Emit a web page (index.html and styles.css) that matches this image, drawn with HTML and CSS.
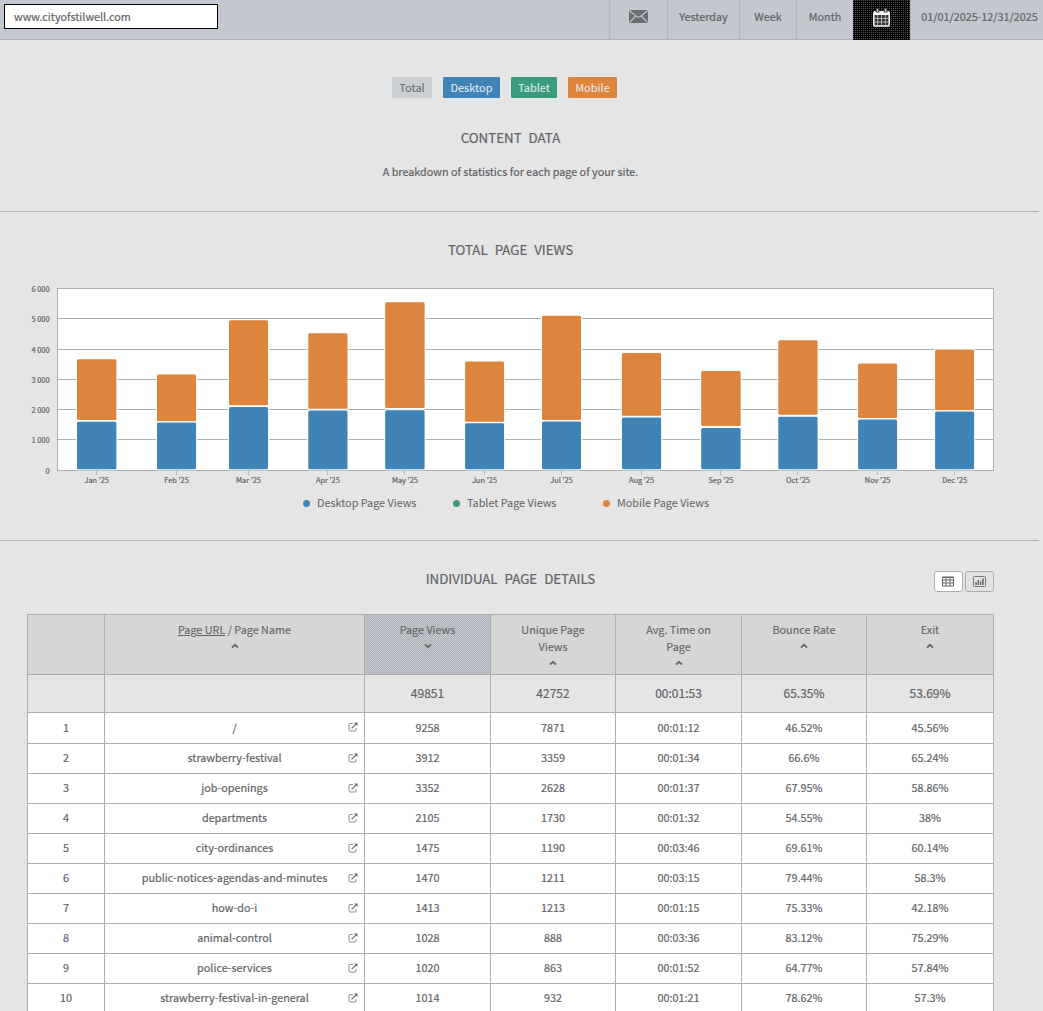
FILE: index.html
```html
<!DOCTYPE html>
<html lang="en">
<head>
  <meta charset="UTF-8">
  <meta name="viewport" content="width=device-width, initial-scale=1.0">
  <title>Content Data</title>
  <link rel="stylesheet" href="styles.css">
</head>
<body>
  <!-- Icons -->
  <svg class="sprite" width="0" height="0">
    <symbol id="icon-link" viewBox="0 0 10 10">
      <path d="M5 1.5H2Q1 1.5 1 2.5V8Q1 9 2 9H7Q8 9 8 8V6" fill="none" stroke="#8a8b8d" stroke-width="1"/>
      <path d="M3.6 6.4L8 2" fill="none" stroke="#77787b" stroke-width="1.3"/>
      <path d="M6 .5H9.5V4Z" fill="#6b6c6f"/>
    </symbol>
    <symbol id="icon-up" viewBox="0 0 8 6">
      <path d="M1 4.6L4 1.8L7 4.6" fill="none" stroke="#666" stroke-width="1.8"/>
    </symbol>
    <symbol id="icon-down" viewBox="0 0 8 6">
      <path d="M1 1.4L4 4.2L7 1.4" fill="none" stroke="#666" stroke-width="1.8"/>
    </symbol>
  </svg>

  <header class="topbar">
    <div class="site">www.cityofstilwell.com</div>
    <nav class="periods">
      <a class="mail">
        <svg width="19" height="13" viewBox="0 0 19 13">
          <rect width="19" height="13" rx="1.5" fill="#6b6d70"/>
          <path d="M.5 .8L7.5 6.4Q9.5 8 11.5 6.4L18.5 .8M1 12.2L6.5 6M18 12.2L12.5 6" fill="none" stroke="#c3c7cf" stroke-width="1.2"/>
        </svg>
      </a>
      <a class="yesterday">Yesterday</a>
      <a class="week">Week</a>
      <a class="month">Month</a>
      <a class="custom">
        <svg width="17" height="19" viewBox="0 0 17 19">
          <rect x=".8" y="4" width="15.4" height="14" rx="1" fill="#333" stroke="#fff" stroke-width="1.5"/>
          <path d="M1 3.2H16V7H1Z" fill="#fff"/>
          <path d="M4.5 0V4.5M12.5 0V4.5" stroke="#000" stroke-width="3.6"/>
          <path d="M4.5 .5V4.5M12.5 .5V4.5" stroke="#bbb" stroke-width="2"/>
          <path d="M1 10.5H16M1 14H16M4.7 7V18M8.5 7V18M12.3 7V18" stroke="#bbb" stroke-width=".9"/>
        </svg>
      </a>
      <a class="range">01/01/2025-12/31/2025</a>
    </nav>
  </header>

  <section class="intro">
    <div class="tags">
      <span class="tag total">Total</span>
      <span class="tag desktop">Desktop</span>
      <span class="tag tablet">Tablet</span>
      <span class="tag mobile">Mobile</span>
    </div>
    <h2>CONTENT DATA</h2>
    <p>A breakdown of statistics for each page of your site.</p>
  </section>

  <section class="views">
    <h2>TOTAL PAGE VIEWS</h2>
    <svg id="chart" width="967" height="216" viewBox="27 274 967 216"></svg>
    <div class="legend">
      <span><i class="desktop"></i>Desktop Page Views</span>
      <span><i class="tablet"></i>Tablet Page Views</span>
      <span><i class="mobile"></i>Mobile Page Views</span>
    </div>
  </section>

  <section class="details">
    <div class="details-head">
      <h2>INDIVIDUAL PAGE DETAILS</h2>
      <div class="toggle">
        <button class="active">
          <svg width="12" height="11" viewBox="0 0 12 11">
            <path d="M.5 1H11.5V10H.5ZM0 1.5H12M0 4H12M0 7H12M4 1V10M8 1V10" fill="none" stroke="#666" stroke-width="1"/>
          </svg>
        </button>
        <button>
          <svg width="13" height="11" viewBox="0 0 13 11">
            <rect x=".5" y=".5" width="12" height="10" rx="1" fill="none" stroke="#77797c"/>
            <path d="M3 6V9M5.3 4V9M7.7 5.5V9M10 2.5V9" stroke="#666" stroke-width="1.5"/>
          </svg>
        </button>
      </div>
    </div>
    <table>
      <colgroup>
        <col class="c-num"><col class="c-url"><col class="c-views"><col class="c-unique"><col class="c-time"><col class="c-bounce"><col class="c-exit">
      </colgroup>
      <thead>
        <tr>
          <th></th>
          <th><u>Page URL</u> / Page Name<svg class="sort"><use href="#icon-up"/></svg></th>
          <th class="sorted">Page Views<svg class="sort"><use href="#icon-down"/></svg></th>
          <th>Unique Page<br>Views<svg class="sort"><use href="#icon-up"/></svg></th>
          <th>Avg. Time on<br>Page<svg class="sort"><use href="#icon-up"/></svg></th>
          <th>Bounce Rate<svg class="sort"><use href="#icon-up"/></svg></th>
          <th>Exit<svg class="sort"><use href="#icon-up"/></svg></th>
        </tr>
        <tr class="totals">
          <td></td><td></td><td>49851</td><td>42752</td><td>00:01:53</td><td>65.35%</td><td>53.69%</td>
        </tr>
      </thead>
      <tbody id="rows"></tbody>
    </table>
  </section>

  <script>
    const pages = [
      ["/", 9258, 7871, "00:01:12", "46.52%", "45.56%"],
      ["strawberry-festival", 3912, 3359, "00:01:34", "66.6%", "65.24%"],
      ["job-openings", 3352, 2628, "00:01:37", "67.95%", "58.86%"],
      ["departments", 2105, 1730, "00:01:32", "54.55%", "38%"],
      ["city-ordinances", 1475, 1190, "00:03:46", "69.61%", "60.14%"],
      ["public-notices-agendas-and-minutes", 1470, 1211, "00:03:15", "79.44%", "58.3%"],
      ["how-do-i", 1413, 1213, "00:01:15", "75.33%", "42.18%"],
      ["animal-control", 1028, 888, "00:03:36", "83.12%", "75.29%"],
      ["police-services", 1020, 863, "00:01:52", "64.77%", "57.84%"],
      ["strawberry-festival-in-general", 1014, 932, "00:01:21", "78.62%", "57.3%"]
    ];

    document.getElementById("rows").innerHTML = pages.map(([url, ...cells], i) => `
      <tr>
        <td>${i + 1}</td>
        <td><div class="url"><span>${url}</span><svg class="link"><use href="#icon-link"/></svg></div></td>
        ${cells.map(c => `<td>${c}</td>`).join("")}
      </tr>`).join("");

    // month, left edge, width, top of mobile, bottom of mobile, top of desktop
    const months = [
      ["Jan", 77, 39.4, 359.2, 420, 421.7],
      ["Feb", 157, 39.1, 374.6, 421.2, 422.6],
      ["Mar", 229, 39, 320.2, 405.3, 407],
      ["Apr", 308.3, 39.2, 333.3, 408.8, 410.5],
      ["May", 385.2, 39.4, 302.2, 408, 410.3],
      ["Jun", 465.1, 39, 361.5, 421.8, 423.2],
      ["Jul", 542, 39, 315.7, 419.9, 421.6],
      ["Aug", 621.9, 39.2, 353, 415.8, 417.5],
      ["Sep", 701.2, 39.4, 371, 426, 428.1],
      ["Oct", 778.3, 39.3, 340.2, 414.8, 416.7],
      ["Nov", 858.1, 39, 363.6, 418, 419.5],
      ["Dec", 935.1, 39, 349.6, 410.3, 411.6]
    ];
    const grid = [288.5, 318.5, 349.5, 379.5, 409.5, 439.5, 470.5];
    const labels = ["6 000", "5 000", "4 000", "3 000", "2 000", "1 000", "0"];

    let out = `<rect class="plot" x="57.5" y="288.5" width="936" height="182"/>`;
    grid.forEach((y, i) => {
      out += `<path class="grid" d="M57 ${y}H994"/>`;
      out += `<text class="axis" x="49.6" y="${y + 3}" text-anchor="end">${labels[i]}</text>`;
    });
    months.forEach(([name, x, w, top, bottom, base]) => {
      const mid = x + w / 2;
      out += `<rect class="bar mobile" x="${x}" y="${top}" width="${w}" height="${bottom - top}" rx="1.5"/>`;
      out += `<rect class="bar desktop" x="${x}" y="${base}" width="${w}" height="${469.2 - base}" rx="1.5"/>`;
      out += `<path class="tick" d="M${Math.floor(mid) + .5} 471V475"/>`;
      out += `<text class="axis" x="${mid}" y="483" text-anchor="middle">${name} '25</text>`;
    });
    document.getElementById("chart").innerHTML = out;
  </script>
</body>
</html>
```
FILE: styles.css
```css
* {
  box-sizing: border-box;
}

body {
  margin: 0;
  height: 1011px;
  overflow: hidden;
  background: #e5e5e5;
  color: #626366;
  font-family: "Noto Sans CJK SC", "Noto Sans", sans-serif;
  font-size: 10.8px;
  line-height: 17px;
  -webkit-text-stroke: 0.2px;
}

h2 {
  margin: 0;
  font-size: 13.3px;
  font-weight: 400;
  line-height: 20px;
  word-spacing: 4px;
  text-align: center;
}

.sprite {
  position: absolute;
}

/* Top bar */
.topbar {
  display: flex;
  justify-content: space-between;
  height: 40px;
  background: #c3c7cf;
  border-bottom: 1px solid #acafb3;
}

.site {
  width: 214px;
  height: 25px;
  margin: 4px 0 0 4px;
  padding-left: 9px;
  line-height: 22px;
  background: #fff;
  border: 1px solid #000;
}

.periods {
  display: flex;
  height: 40px;
}

.periods a {
  display: flex;
  justify-content: center;
  height: 39px;
  border-left: 1px dotted #a3a5a8;
  line-height: 32px;
}

.periods .mail { width: 58px; }
.periods .yesterday { width: 72px; }
.periods .week { width: 57px; }
.periods .month { width: 57px; }
.periods .range { width: 133px; padding-left: 5px; }

.mail svg {
  margin-top: 10px;
}

.periods .custom {
  width: 57px;
  height: 40px;
  border: 0;
  background: repeating-conic-gradient(#000 0 75%, #5a5a5a 0 100%) 0 0 / 2px 2px;
}

.custom svg {
  margin: 8px 1px 0 0;
}

/* Intro */
.intro {
  width: 1039px;
  height: 172px;
  padding: 37px 45px 0 27px;
  border-bottom: 1px solid #afb0b2;
}

.tags {
  display: flex;
  justify-content: center;
  gap: 11px;
  margin-right: 13px;
}

.tag {
  height: 21px;
  padding-left: 1px;
  line-height: 21px;
  text-align: center;
  border-radius: 1px;
  color: #e9eef2;
  -webkit-text-stroke: 0;
  font-size: 11px;
}

.tag.total { width: 40px; background: #cbd0d5; color: #626366; }
.tag.desktop { width: 57px; background: #4083b7; }
.tag.tablet { width: 46px; background: #3a9c7e; }
.tag.mobile { width: 49px; background: #dd843d; }

.intro h2 {
  margin-top: 30px;
}

.intro p {
  margin: 15px 0 0;
  text-align: center;
}

/* Chart */
.views {
  width: 1039px;
  height: 329px;
  padding: 28px 45px 0 27px;
  border-bottom: 1px solid #afb0b2;
}

#chart {
  display: block;
  margin-top: 14px;
}

.plot { fill: #fff; stroke: #afb0b2; }
.grid { stroke: #afb0b2; }
.tick { stroke: #b4b8bf; }
.axis { font-size: 7.4px; fill: #626366; stroke: #626366; stroke-width: 0.2px; }
.bar { stroke: #fff; stroke-width: 2px; paint-order: stroke; }
.bar.desktop { fill: #4083b7; }
.bar.mobile { fill: #dd843d; }

.legend {
  display: flex;
  margin: 4px 0 0 276px;
  -webkit-text-stroke: 0;
}

.legend span {
  display: flex;
  align-items: center;
  width: 150px;
}

.legend i {
  width: 7px;
  height: 7px;
  margin: 1px 7px 0 0;
  border-radius: 50%;
}

.legend .desktop { background: #4083b7; }
.legend .tablet { background: #3a9c7e; }
.legend .mobile { background: #dd843d; }

/* Page details */
.details {
  padding: 28px 49px 0 27px;
}

.details-head {
  display: grid;
  grid-template-columns: 60px 1fr 60px;
  height: 45px;
}

.details-head h2 {
  grid-column: 2;
}

.toggle {
  display: flex;
  gap: 2px;
  padding-top: 2px;
}

.toggle button {
  display: flex;
  align-items: center;
  justify-content: center;
  width: 29px;
  height: 21px;
  padding: 0;
  background: #e2e2e2;
  border: 1px solid #adaeb0;
  border-radius: 3px;
}

.toggle .active {
  padding-right: 2px;
  background: #fff;
}

table {
  width: 967px;
  table-layout: fixed;
  border-collapse: separate;
  border-spacing: 0;
  border-top: 1px solid #adaeb0;
  border-left: 1px solid #adaeb0;
}

.c-num { width: 77px; }
.c-url { width: 260px; }
.c-views { width: 126px; }
.c-unique { width: 125px; }
.c-time { width: 126px; }
.c-bounce { width: 125px; }
.c-exit { width: 127px; }

th, td {
  padding: 0 0 2px;
  height: 30px;
  text-align: center;
  font-weight: 400;
  border-right: 1px solid #adaeb0;
  border-bottom: 1px solid #adaeb0;
}

th {
  height: 60px;
  padding-top: 6px;
  vertical-align: top;
  background: #d6d6d6;
  -webkit-text-stroke: 0.1px;
}

th.sorted {
  background: repeating-conic-gradient(#aeb3ba 0 25%, #c3c8cf 0 50%) 0 0 / 2px 2px;
}

.sort {
  display: block;
  width: 8px;
  height: 6px;
  margin: 5px auto 0;
}

.totals td {
  height: 38px;
  font-size: 12px;
}

tbody td {
  background: #fff;
}

tbody tr:first-child td {
  height: 31px;
}

.url {
  display: flex;
  align-items: center;
  padding: 0 6.5px 0 16.5px;
}

.url span {
  flex: 1;
}

.link {
  width: 10px;
  height: 10px;
}
```
